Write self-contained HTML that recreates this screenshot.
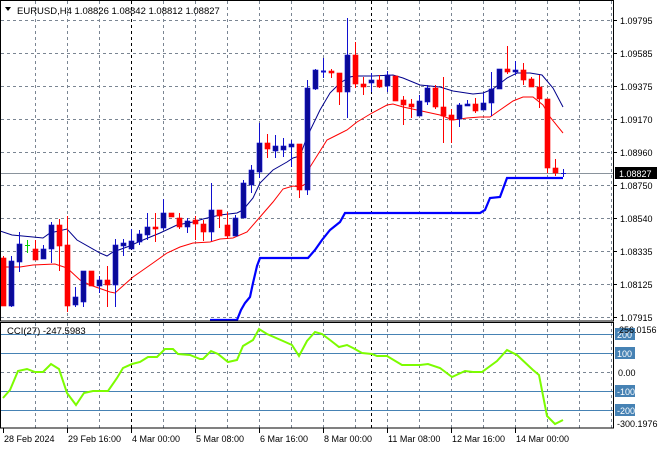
<!DOCTYPE html>
<html><head><meta charset="utf-8"><style>
html,body{margin:0;padding:0;background:#fff;width:660px;height:450px;overflow:hidden}
svg{display:block}
text{font-family:"Liberation Sans",sans-serif;font-size:9px;fill:#000}
</style></head><body>
<svg id="s" width="660" height="450" xmlns="http://www.w3.org/2000/svg">
<g id="grid" stroke="#7a8592" stroke-dasharray="3,3" stroke-width="1"></g>
<line x1="0" y1="173.5" x2="613" y2="173.5" stroke="#8a939c"/>
<polyline fill="none" stroke="#0000ff" stroke-width="2.2" points="210,320 237,320 241,310 245,303 250,297 253,283 257,266 260,258 308,258 315,250 322,240 330,230 340,222 345,213 480,213 485,210 490,198 500,197 507,178 563,178"/>
<polyline fill="none" stroke="#ff0000" stroke-width="1" points="0,267 20,267 33,265 55,264 67,268 80,280 90,285 110,292 115,293 133,277 153,263 167,253 180,247 193,243 210,242 220,239 233,238 247,232 260,217 273,202 283,189 293,186 300,187 307,183 310,167 327,140 337,135 347,130 357,122 372,113 387,105 393,104 403,107 417,110 440,115 453,120 467,118 480,117 490,117 500,110 513,101 523,97 533,97 543,105 550,117 563,133"/>
<polyline fill="none" stroke="#00008b" stroke-width="1" points="0,231 12,235 33,237 43,238 50,233 67,229 77,240 100,253 107,256 113,252 127,247 143,240 160,233 177,225 193,222 203,219 220,215 237,213 243,210 253,198 260,183 273,170 287,162 293,158 300,156 307,137 320,110 330,93 340,83 350,77 355,76 373,76 393,75 403,78 420,85 440,87 453,91 473,94 483,93 493,89 507,78 517,73 530,73 542,75 553,88 563,107"/>
<g id="candles"></g>
<rect x="0.5" y="0.5" width="613" height="320.5" fill="none" stroke="#000"/>
<rect x="0.5" y="322.5" width="613" height="105.5" fill="none" stroke="#000"/>
<g stroke="#4682b4" stroke-width="1">
<line x1="1" y1="334.5" x2="613" y2="334.5"/><line x1="1" y1="353.5" x2="613" y2="353.5"/>
<line x1="1" y1="391.5" x2="613" y2="391.5"/><line x1="1" y1="410.5" x2="613" y2="410.5"/>
</g>
<line x1="1" y1="372.5" x2="613" y2="372.5" stroke="#7a8592" stroke-dasharray="3,3"/>
<polyline fill="none" stroke="#7cfc00" stroke-width="2" points="3,398 10,390 18,371 27,369 35,372 43,372 51,364 59,369 67,393 76,405 84,393 93,391 100,391 108,391 117,378 123,368 132,364 140,362 148,357 157,357 165,349 173,349 178,354 190,355 200,359 203,359 211,351 218,354 228,362 237,360 243,346 253,340 259,329 267,334 283,341 292,345 299,356 307,341 315,332 322,334 330,340 339,347 347,345 353,348 362,353 372,354 377,356 387,356 402,365 420,365 428,364 440,368 452,377 465,371 473,372 482,372 497,361 507,350 517,355 533,370 539,375 547,416 555,424 563,420"/>
<g id="tick" stroke="#000"></g>
<path d="M5 7 L11 7 L8 11 Z" fill="#000"/>
<text x="17" y="14" style="font-size:9.5px">EURUSD,H4  1.08826 1.08842 1.08812 1.08827</text>
<text x="7" y="334" style="font-size:9.5px">CCI(27) -247.5983</text>
<g id="labels"></g>
</svg>
<script>
var NS="http://www.w3.org/2000/svg",s=document.getElementById('s');
function el(p,n,a,t){var e=document.createElementNS(NS,n);for(var k in a)e.setAttribute(k,a[k]);if(t!=null)e.textContent=t;document.getElementById(p).appendChild(e);return e;}
var vx=[35,67,99,163,195,227,259,291,323,355,387,419,451,483,515,547,579,611];
vx.forEach(function(x){el('grid','line',{x1:x+.5,y1:1,x2:x+.5,y2:320});el('grid','line',{x1:x+.5,y1:323,x2:x+.5,y2:428});});
[131,371].forEach(function(x){el('grid','line',{x1:x+.5,y1:1,x2:x+.5,y2:320,stroke:'#000'});el('grid','line',{x1:x+.5,y1:323,x2:x+.5,y2:428,stroke:'#000'});});
[20,53,86,119,152,185,218,251,284,317].forEach(function(y){el('grid','line',{x1:1,y1:y+.5,x2:613,y2:y+.5});});
var C=[["r",258,306,256,306],["b",261,306,256,307],["b",244,262,232,272],["g",245,245,240,253],["r",249,260,240,260],["b",249,259,245,259],["b",225,249,222,263],["r",225,246,219,271],["r",245,306,216,312],["b",297,305,287,307],["b",271,302,271,307],["r",271,286,271,286],["b",280,286,276,293],["r",280,285,266,307],["b",245,285,239,307],["b",243,246,239,256],["b",241,249,229,249],["b",234,242,230,245],["b",227,235,213,240],["r",227,229,213,242],["b",213,228,199,230],["r",213,217,213,217],["r",218,227,213,229],["b",221,227,218,233],["r",220,224,216,240],["r",224,232,220,241],["b",210,232,183,241],["r",210,216,210,228],["r",225,236,212,239],["b",218,236,215,236],["b",183,218,180,218],["b",170,185,165,193],["b",143,172,123,178],["r",143,149,134,158],["b",146,151,135,158],["b",146,150,138,157],["b",144,147,140,167],["r",144,190,144,198],["b",88,190,80,195],["b",70,89,69,90],["b",71,72,58,78],["r",71,73,69,78],["r",73,92,73,105],["b",55,92,18,118],["r",55,84,42,88],["r",84,87,77,95],["b",80,83,73,92],["r",80,87,75,88],["b",75,86,71,92],["r",76,101,76,101],["r",100,105,96,125],["r",104,107,99,118],["b",101,116,95,116],["b",88,102,85,105],["r",88,107,85,109],["r",107,116,77,143],["r",115,120,109,143],["b",105,119,103,127],["b",104,106,100,106],["r",104,111,98,113],["b",103,110,93,110],["b",89,103,72,116],["b",69,89,69,89],["r",69,72,46,74],["b",70,72,61,75],["r",70,80,63,85],["r",79,87,77,87],["r",87,99,75,108],["r",99,168,99,173],["r",168,173,159,176],["b",173,173,169,177]];
C.forEach(function(c,i){var x=3+8*i,col=c[0]=="r"?"#ff0000":c[0]=="g"?"#00d000":"#1010d0",fill=c[0]=="b"?"#0a0a96":col;
el('candles','line',{x1:x+.5,y1:c[3],x2:x+.5,y2:c[4],stroke:col});
var h=c[2]-c[1];if(h<2){el('candles','line',{x1:x-2,y1:c[1]+.5,x2:x+3,y2:c[1]+.5,stroke:col,'stroke-width':h<1?1:2});}
else el('candles','rect',{x:x-2,y:c[1],width:5,height:h,fill:fill,stroke:col,'stroke-width':.6});});
var P=[["1.09795",20],["1.09585",53],["1.09375",86],["1.09170",119],["1.08960",152],["1.08750",185],["1.08540",218],["1.08335",251],["1.08125",284],["1.07915",317]];
P.forEach(function(p){el('tick','line',{x1:613,y1:p[1]+.5,x2:617,y2:p[1]+.5});el('labels','text',{x:620,y:p[1]+4},p[0]);});
el('labels','rect',{x:615,y:167,width:42,height:12,fill:'#000'});
el('labels','text',{x:619,y:177,style:'fill:#fff'},"1.08827");
[["200",334],["100",353],["-100",391],["-200",410]].forEach(function(p){el('labels','rect',{x:615,y:p[1]-6,width:20,height:12,fill:'#4682b4'});el('labels','text',{x:617,y:p[1]+4,style:'fill:#fff'},p[0]);});
el('labels','text',{x:619,y:333},"256.0156");
el('labels','text',{x:618,y:376},"0.00");
el('labels','text',{x:617,y:427},"-300.1976");
var T=[["28 Feb 2024",3],["29 Feb 16:00",67],["4 Mar 00:00",131],["5 Mar 08:00",195],["6 Mar 16:00",259],["8 Mar 00:00",323],["11 Mar 08:00",387],["12 Mar 16:00",451],["14 Mar 00:00",515]];
T.forEach(function(t){el('tick','line',{x1:t[1]+.5,y1:428,x2:t[1]+.5,y2:433});el('labels','text',{x:t[1]+1,y:442},t[0]);});
</script>
</body></html>
